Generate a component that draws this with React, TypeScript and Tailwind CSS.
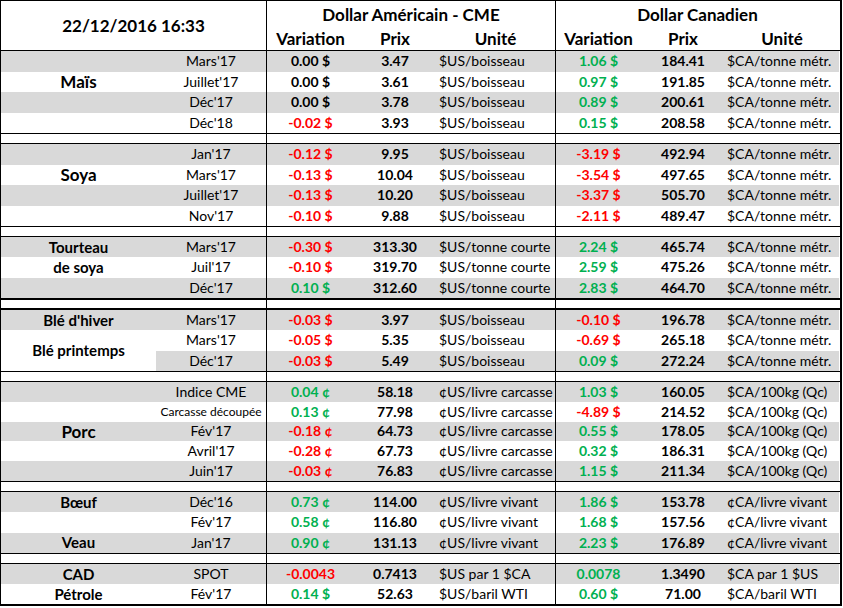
import React from "react";

type Tone = "g" | "r" | "k";

interface Row {
	label?: string;
	big?: boolean;
	span?: boolean;
	skipA?: boolean;
	contract: string;
	small?: boolean;
	v1: string;
	c1: Tone;
	p1: string;
	u1: string;
	v2: string;
	c2: Tone;
	p2: string;
	u2: string;
}

interface Group {
	size: string;
	rows: Row[];
}

const COLS = "grid grid-cols-[155px_110px_88px_82px_119px_86px_84px_114px]";

const tone: Record<Tone, string> = {
	g: "text-[#00b050]",
	r: "text-[#ff0000]",
	k: "text-black"
};

const BOIS = "$US/boisseau";
const TONNE = "$CA/tonne métr.";
const CARC = "¢US/livre carcasse";
const KG = "$CA/100kg (Qc)";
const VIV_US = "¢US/livre vivant";
const VIV_CA = "¢CA/livre vivant";

const groups: Group[] = [
	{
		size: "h-[82px] grid-rows-4",
		rows: [
			{ contract: "Mars'17", v1: "0.00 $", c1: "k", p1: "3.47", u1: BOIS, v2: "1.06 $", c2: "g", p2: "184.41", u2: TONNE },
			{ label: "Maïs", big: true, contract: "Juillet'17", v1: "0.00 $", c1: "k", p1: "3.61", u1: BOIS, v2: "0.97 $", c2: "g", p2: "191.85", u2: TONNE },
			{ contract: "Déc'17", v1: "0.00 $", c1: "k", p1: "3.78", u1: BOIS, v2: "0.89 $", c2: "g", p2: "200.61", u2: TONNE },
			{ contract: "Déc'18", v1: "-0.02 $", c1: "r", p1: "3.93", u1: BOIS, v2: "0.15 $", c2: "g", p2: "208.58", u2: TONNE }
		]
	},
	{
		size: "h-[82px] grid-rows-4",
		rows: [
			{ contract: "Jan'17", v1: "-0.12 $", c1: "r", p1: "9.95", u1: BOIS, v2: "-3.19 $", c2: "r", p2: "492.94", u2: TONNE },
			{ label: "Soya", big: true, contract: "Mars'17", v1: "-0.13 $", c1: "r", p1: "10.04", u1: BOIS, v2: "-3.54 $", c2: "r", p2: "497.65", u2: TONNE },
			{ contract: "Juillet'17", v1: "-0.13 $", c1: "r", p1: "10.20", u1: BOIS, v2: "-3.37 $", c2: "r", p2: "505.70", u2: TONNE },
			{ contract: "Nov'17", v1: "-0.10 $", c1: "r", p1: "9.88", u1: BOIS, v2: "-2.11 $", c2: "r", p2: "489.47", u2: TONNE }
		]
	},
	{
		size: "h-[61px] grid-rows-3",
		rows: [
			{ label: "Tourteau", contract: "Mars'17", v1: "-0.30 $", c1: "r", p1: "313.30", u1: "$US/tonne courte", v2: "2.24 $", c2: "g", p2: "465.74", u2: TONNE },
			{ label: "de soya", contract: "Juil'17", v1: "-0.10 $", c1: "r", p1: "319.70", u1: "$US/tonne courte", v2: "2.59 $", c2: "g", p2: "475.26", u2: TONNE },
			{ contract: "Déc'17", v1: "0.10 $", c1: "g", p1: "312.60", u1: "$US/tonne courte", v2: "2.83 $", c2: "g", p2: "464.70", u2: TONNE }
		]
	},
	{
		size: "h-[61px] grid-rows-3",
		rows: [
			{ label: "Blé d'hiver", contract: "Mars'17", v1: "-0.03 $", c1: "r", p1: "3.97", u1: BOIS, v2: "-0.10 $", c2: "r", p2: "196.78", u2: TONNE },
			{ label: "Blé printemps", span: true, contract: "Mars'17", v1: "-0.05 $", c1: "r", p1: "5.35", u1: BOIS, v2: "-0.69 $", c2: "r", p2: "265.18", u2: TONNE },
			{ skipA: true, contract: "Déc'17", v1: "-0.03 $", c1: "r", p1: "5.49", u1: BOIS, v2: "0.09 $", c2: "g", p2: "272.24", u2: TONNE }
		]
	},
	{
		size: "h-[99px] grid-rows-5",
		rows: [
			{ contract: "Indice CME", v1: "0.04 ¢", c1: "g", p1: "58.18", u1: CARC, v2: "1.03 $", c2: "g", p2: "160.05", u2: KG },
			{ contract: "Carcasse découpée", small: true, v1: "0.13 ¢", c1: "g", p1: "77.98", u1: CARC, v2: "-4.89 $", c2: "r", p2: "214.52", u2: KG },
			{ label: "Porc", big: true, contract: "Fév'17", v1: "-0.18 ¢", c1: "r", p1: "64.73", u1: CARC, v2: "0.55 $", c2: "g", p2: "178.05", u2: KG },
			{ contract: "Avril'17", v1: "-0.28 ¢", c1: "r", p1: "67.73", u1: CARC, v2: "0.32 $", c2: "g", p2: "186.31", u2: KG },
			{ contract: "Juin'17", v1: "-0.03 ¢", c1: "r", p1: "76.83", u1: CARC, v2: "1.15 $", c2: "g", p2: "211.34", u2: KG }
		]
	},
	{
		size: "h-[61px] grid-rows-3",
		rows: [
			{ label: "Bœuf", contract: "Déc'16", v1: "0.73 ¢", c1: "g", p1: "114.00", u1: VIV_US, v2: "1.86 $", c2: "g", p2: "153.78", u2: VIV_CA },
			{ contract: "Fév'17", v1: "0.58 ¢", c1: "g", p1: "116.80", u1: VIV_US, v2: "1.68 $", c2: "g", p2: "157.56", u2: VIV_CA },
			{ label: "Veau", contract: "Jan'17", v1: "0.90 ¢", c1: "g", p1: "131.13", u1: VIV_US, v2: "2.23 $", c2: "g", p2: "176.89", u2: VIV_CA }
		]
	},
	{
		size: "h-[40px] grid-rows-2",
		rows: [
			{ label: "CAD", contract: "SPOT", v1: "-0.0043", c1: "r", p1: "0.7413", u1: "$US par 1 $CA", v2: "0.0078", c2: "g", p2: "1.3490", u2: "$CA par 1 $US" },
			{ label: "Pétrole", contract: "Fév'17", v1: "0.14 $", c1: "g", p1: "52.63", u1: "$US/baril WTI", v2: "0.60 $", c2: "g", p2: "71.00", u2: "$CA/baril WTI" }
		]
	}
];

const center = "flex items-center justify-center whitespace-nowrap";
const left = "flex items-center whitespace-nowrap";

const Spacer = ({ thick }: { thick?: boolean }) => (
	<div className={`${COLS} ${thick ? "h-[12px] border-y-2" : "h-[11px] border-y"} border-black`}>
		<div className="col-span-2" />
		<div className="col-span-3 border-l border-black" />
		<div className="col-span-3 border-l border-black" />
	</div>
);

const GroupBlock = ({ group }: { group: Group }) => (
	<div className={`${COLS} ${group.size}`}>
		{group.rows.map((r, i) => {
			const bg = i % 2 === 0 ? "bg-[#d9d9d9]" : "bg-white";
			return (
				<React.Fragment key={i}>
					{!r.skipA && (
						<div
							className={`${center} font-bold ${r.big ? "text-[17px]" : "text-[15px]"} ${
								r.span ? "row-span-2 bg-white" : bg
							}`}>
							{r.label}
						</div>
					)}
					<div className={`${center} ${bg} ${r.small ? "text-[12px]" : "text-[14px]"}`}>{r.contract}</div>
					<div className={`${center} ${bg} border-l border-black font-bold text-[14px] ${tone[r.c1]}`}>{r.v1}</div>
					<div className={`${center} ${bg} font-bold text-[14px]`}>{r.p1}</div>
					<div className={`${left} ${bg} pl-[3px] text-[14px]`}>{r.u1}</div>
					<div className={`${center} ${bg} border-l border-black font-bold text-[14px] ${tone[r.c2]}`}>{r.v2}</div>
					<div className={`${center} ${bg} font-bold text-[14px]`}>{r.p2}</div>
					<div className={`${left} ${bg} pl-[2px] text-[14px]`}>{r.u2}</div>
				</React.Fragment>
			);
		})}
	</div>
);

export default function App() {
	return (
		<div className="w-[843px] h-[608px] bg-white overflow-hidden font-['Lato',sans-serif] text-black leading-none">
			<div className="w-[842px] border-t border-l border-r-2 border-b-2 border-black">
				{/* Header */}
				<div className={`${COLS} grid-rows-[26px_23px] border-b border-black font-bold text-[17px]`}>
					<div className={`${center} col-span-2 row-span-2`}>22/12/2016 16:33</div>
					<div className={`${center} col-span-3 border-l border-black`}>Dollar Américain - CME</div>
					<div className={`${center} col-span-3 border-l border-black`}>Dollar Canadien</div>
					<div className={`${center} border-l border-black`}>Variation</div>
					<div className={center}>Prix</div>
					<div className={center}>Unité</div>
					<div className={`${center} border-l border-black`}>Variation</div>
					<div className={center}>Prix</div>
					<div className={center}>Unité</div>
				</div>

				<GroupBlock group={groups[0]} />
				<Spacer />
				<GroupBlock group={groups[1]} />
				<Spacer />
				<GroupBlock group={groups[2]} />
				<Spacer thick />
				<GroupBlock group={groups[3]} />
				<Spacer />
				<GroupBlock group={groups[4]} />
				<Spacer />
				<GroupBlock group={groups[5]} />
				<Spacer />
				<GroupBlock group={groups[6]} />
			</div>
		</div>
	);
}
